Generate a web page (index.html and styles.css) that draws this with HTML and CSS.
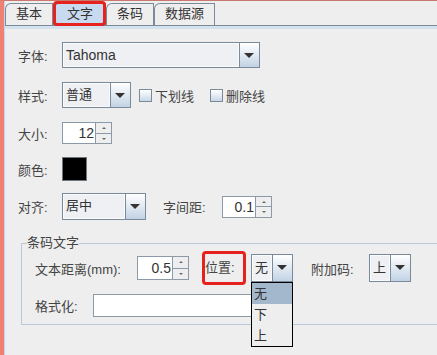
FILE: index.html
```html
<!DOCTYPE html>
<html lang="zh">
<head>
    <meta charset="UTF-8">
    <title>文字设置</title>
    <link rel="stylesheet" href="styles.css">
</head>
<body>
    <div class="window">
        <div class="content">
            <div class="tabs">
                <div class="tab">基本</div>
                <div class="tab selected marked">文字</div>
                <div class="tab">条码</div>
                <div class="tab">数据源</div>
            </div>
            <div class="tab-strip"></div>

            <div class="panel">
                <div class="row row-font">
                    <span class="label">字体:</span>
                    <div class="combo combo-font">
                        <span class="value latin">Tahoma</span>
                        <span class="arrow"></span>
                    </div>
                </div>

                <div class="row row-style">
                    <span class="label">样式:</span>
                    <div class="combo combo-style">
                        <span class="value">普通</span>
                        <span class="arrow"></span>
                    </div>
                    <span class="check"><span class="box"></span>下划线</span>
                    <span class="check"><span class="box"></span>删除线</span>
                </div>

                <div class="row row-size">
                    <span class="label">大小:</span>
                    <div class="spinner">
                        <span class="field">12</span>
                        <span class="btns"><span class="up"></span><span class="down"></span></span>
                    </div>
                </div>

                <div class="row row-color">
                    <span class="label">颜色:</span>
                    <span class="swatch"></span>
                </div>

                <div class="row row-align">
                    <span class="label">对齐:</span>
                    <div class="combo combo-align">
                        <span class="value">居中</span>
                        <span class="arrow"></span>
                    </div>
                    <span class="label label-spacing">字间距:</span>
                    <div class="spinner">
                        <span class="field">0.1</span>
                        <span class="btns"><span class="up"></span><span class="down"></span></span>
                    </div>
                </div>

                <fieldset class="group">
                    <legend>条码文字</legend>
                    <div class="row row-text">
                        <span class="label label-distance">文本距离(mm):</span>
                        <div class="spinner spinner-distance">
                            <span class="field">0.5</span>
                            <span class="btns"><span class="up"></span><span class="down"></span></span>
                        </div>
                        <span class="label label-pos marked">位置:</span>
                        <div class="combo combo-small">
                            <span class="value">无</span>
                            <span class="arrow"></span>
                            <ul class="popup">
                                <li class="active">无</li>
                                <li>下</li>
                                <li>上</li>
                            </ul>
                        </div>
                        <span class="label label-addon">附加码:</span>
                        <div class="combo combo-small">
                            <span class="value">上</span>
                            <span class="arrow"></span>
                        </div>
                    </div>
                    <div class="row row-format">
                        <span class="label label-format">格式化:</span>
                        <span class="textfield"></span>
                    </div>
                </fieldset>
            </div>
        </div>
    </div>
</body>
</html>
```

FILE: styles.css
```css
body {
    margin: 0;
    background-color: #eeeeee;
    font-family: 'Liberation Sans', 'Noto Sans CJK SC', sans-serif;
    font-size: 13px;
    color: #444;
    overflow: hidden;
}

.window {
    height: 355px;
    box-sizing: border-box;
    border-top: 1px solid #c9786d;
    border-left: 4px solid #ef8173;
}

.content {
    height: 100%;
    border-left: 1px solid #cbd3ee;
    overflow: hidden;
}

/* tabs */
.tabs {
    display: flex;
    height: 22px;
    margin-top: 2px;
    border-bottom: 1px solid #7a8a99;
}

.tab {
    box-sizing: border-box;
    height: 22px;
    line-height: 20px;
    padding: 0 10px;
    border: 1px solid #7a8a99;
    border-bottom: none;
    border-top-left-radius: 6px;
    background-color: #eeeeee;
    color: #333;
}

.tab.selected {
    padding: 0 12px 0 13px;
    background-color: #c8daef;
}

.tab-strip {
    height: 3px;
    background-color: #d4e1ee;
}

.marked {
    position: relative;
}

.marked::after {
    content: '';
    position: absolute;
    border: 3px solid #e5221e;
    border-radius: 4px;
}

.tab.marked::after {
    left: -1px;
    right: -1px;
    top: -3px;
    bottom: -1px;
}

/* form */
.panel {
    padding: 13px 0 0 13px;
}

.row {
    display: flex;
    align-items: center;
}

.label {
    width: 44px;
    flex-shrink: 0;
}

.row-font { height: 26px; }
.row-style { height: 26px; margin-top: 14px; }
.row-size { height: 22px; margin-top: 14px; }
.row-color { height: 24px; margin-top: 13px; }
.row-align { height: 27px; margin-top: 12px; }

.combo {
    position: relative;
    box-sizing: border-box;
    display: flex;
    height: 26px;
    border: 1px solid #7a8a99;
}

.combo .value {
    flex: 1;
    padding-left: 3px;
    line-height: 24px;
    background-color: #eef0f3;
    box-shadow: inset 0 0 0 1px #fafbfc;
    border-right: 1px solid #7a8a99;
    color: #333;
}

.combo .value.latin {
    font-size: 14px;
}

.combo .arrow {
    width: 19px;
    background: linear-gradient(#ffffff, #c2d3e5);
    position: relative;
}

.combo .arrow::after {
    content: '';
    position: absolute;
    left: 4px;
    top: 10px;
    border-left: 5px solid transparent;
    border-right: 5px solid transparent;
    border-top: 5px solid #333;
}

.combo-font { width: 198px; }
.combo-style { width: 69px; }
.combo-align { width: 84px; height: 27px; }
.combo-small { width: 42px; height: 28px; }
.combo-small .value { line-height: 26px; }

.check {
    display: flex;
    align-items: center;
    margin-left: 8px;
}

.check + .check {
    margin-left: 16px;
}

.check .box {
    box-sizing: border-box;
    width: 13px;
    height: 13px;
    margin-right: 3px;
    border: 1px solid #7a8a99;
    background: linear-gradient(#ffffff, #c8d8e8);
}

.spinner {
    box-sizing: border-box;
    display: flex;
    width: 50px;
    height: 22px;
    border: 1px solid #8c9aa8;
}

.spinner .field {
    flex: 1;
    background-color: #ffffff;
    text-align: right;
    line-height: 20px;
    font-size: 14px;
    padding-right: 1px;
    color: #333;
}

.spinner .btns {
    width: 15px;
    display: flex;
    flex-direction: column;
    border-left: 1px solid #8c9aa8;
}

.spinner .btns span {
    flex: 1;
    position: relative;
    background-color: #eeeeee;
}

.spinner .btns .up {
    border-bottom: 1px solid #8c9aa8;
}

.spinner .btns span::after {
    content: '';
    position: absolute;
    left: 6px;
    top: 4px;
    border-left: 2px solid transparent;
    border-right: 2px solid transparent;
}

.spinner .btns .up::after {
    border-bottom: 2px solid #666;
}

.spinner .btns .down::after {
    border-top: 2px solid #666;
}

.swatch {
    box-sizing: border-box;
    width: 25px;
    height: 24px;
    background-color: #000;
    border: 1px solid #6d7780;
}

.label-spacing {
    width: 59px;
    margin-left: 17px;
}

/* barcode text group */
.group {
    margin: 15px -30px 0 3px;
    padding: 0 0 7px 13px;
    border: 1px solid #b8c8da;
}

.group legend {
    padding: 0;
    margin-left: -8px;
    line-height: 16px;
}

.row-text {
    height: 28px;
    margin-top: 3px;
}

.label-distance { width: 102px; }
.spinner-distance { width: 52px; height: 24px; }
.spinner-distance .field { line-height: 22px; }

.label-pos {
    width: 46px;
    margin-left: 16px;
    height: 28px;
    line-height: 28px;
}

.label-pos.marked::after {
    left: -3px;
    right: 5px;
    top: -3px;
    bottom: -3px;
}

.label-addon {
    width: 58px;
    margin-left: 18px;
}

.row-format {
    height: 23px;
    margin-top: 12px;
}

.label-format { width: 58px; }

.textfield {
    box-sizing: border-box;
    width: 200px;
    height: 23px;
    background-color: #ffffff;
    border: 1px solid #8c9aa8;
}

.popup {
    position: absolute;
    left: -1px;
    top: 27px;
    z-index: 2;
    box-sizing: border-box;
    width: 42px;
    height: 65px;
    margin: 0;
    padding: 0;
    list-style: none;
    background-color: #eeeeee;
    border: 1px solid #000;
}

.popup li {
    height: 21px;
    line-height: 21px;
    padding-left: 2px;
    color: #333;
}

.popup li.active {
    background-color: #a3b8cc;
}
```
